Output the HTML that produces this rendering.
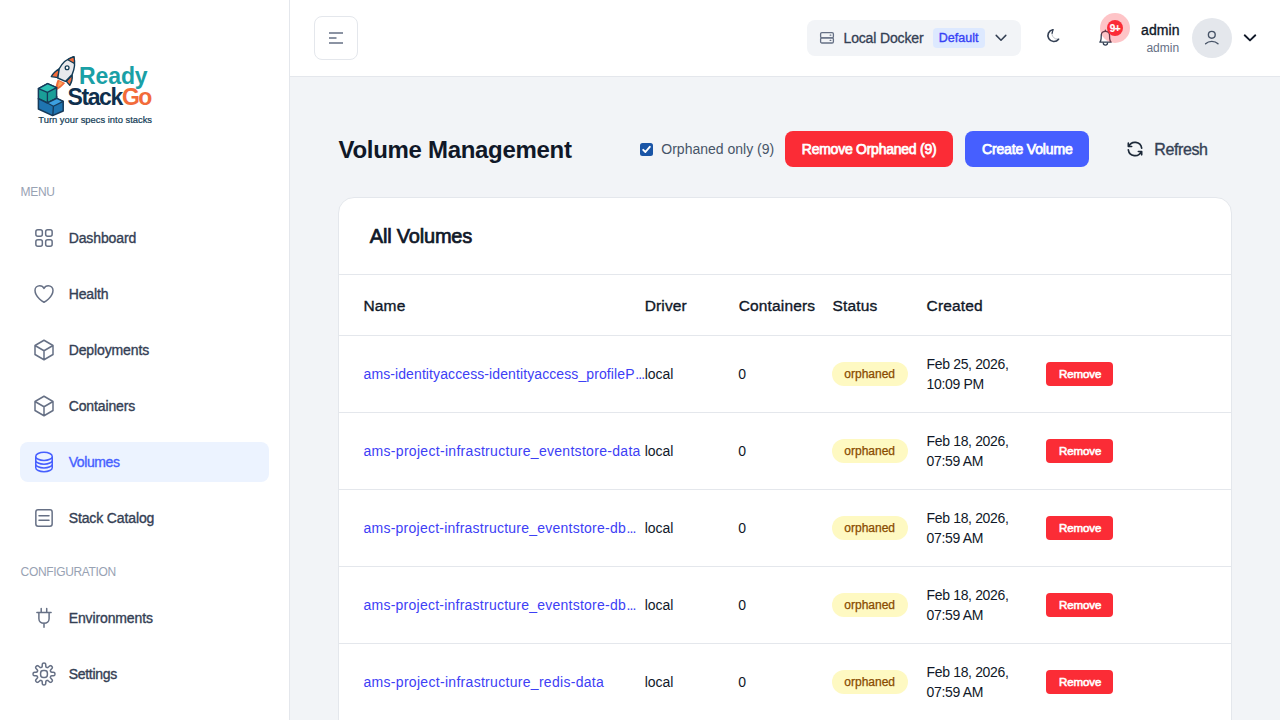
<!DOCTYPE html>
<html><head><meta charset="utf-8">
<style>
*{box-sizing:border-box;margin:0;padding:0}
html,body{width:1280px;height:720px;overflow:hidden;background:#F2F4F7;font-family:"Liberation Sans",sans-serif;position:relative}
.a{position:absolute}
.t{position:absolute;line-height:1;white-space:nowrap}
.sb{left:0;top:0;width:290px;height:720px;background:#fff;border-right:1px solid #E4E7EC}
.hd{left:290px;top:0;width:990px;height:77px;background:#fff;border-bottom:1px solid #E4E7EC}
.nav{font-size:14px;color:#344054;left:68.7px;-webkit-text-stroke:0.35px #344054;letter-spacing:-0.12px}
.ico{position:absolute;left:32px;width:24px;height:24px}
.grp{font-size:12px;color:#98A2B3;left:20.6px;letter-spacing:-0.35px}
.th{font-size:15.5px;color:#101828;top:297.8px;-webkit-text-stroke:0.35px #101828;letter-spacing:0.15px}
.lk{font-size:14px;color:#3D40F5;left:363.5px;letter-spacing:0.3px}
.dt{letter-spacing:-0.35px}
.cell{font-size:14px;color:#101828}
.div{left:339px;width:892px;height:1px;background:#E4E7EC}
.badge{left:832px;width:76px;height:24px;border-radius:12px;background:#FEF9C2}
.rm{left:1046px;width:67px;height:24px;border-radius:4px;background:#FB2C36}
</style></head><body>

<!-- SIDEBAR -->
<div class="a sb"></div>
<!-- logo -->
<svg class="a" style="left:30px;top:50px" width="130" height="80" viewBox="30 50 130 80">
  <!-- flame -->
  <path d="M57.8 79.6 L65.2 83 C62.6 86.2 59 89 55.4 90.6 C55.4 86.8 56.2 83 57.8 79.6 Z" fill="#F26B3A"/>
  <path d="M59 81.2 L62.8 83 C61.4 84.8 59.6 86.2 57.8 87.2 C58 85.2 58.4 83 59 81.2 Z" fill="#FBA55E"/>
  <!-- fins -->
  <path d="M59.6 68.6 C56 70.6 53 73.4 51.3 76.6 L57.9 77.6 Z" fill="#F26B3A" stroke="#123B55" stroke-width="1.3" stroke-linejoin="round"/>
  <path d="M72.2 75 L66.4 81.4 L69.8 85.4 C71.6 82.4 72.6 78.6 72.2 75 Z" fill="#F26B3A" stroke="#123B55" stroke-width="1.3" stroke-linejoin="round"/>
  <!-- body -->
  <path d="M73.9 56.6 C67.6 58.4 62 63.2 59.2 68.8 L57.8 78 L65.4 81.4 L72.2 74.4 C74.6 68.8 75.2 62.4 73.9 56.6 Z" fill="#E8E9EC" stroke="#123B55" stroke-width="1.4" stroke-linejoin="round"/>
  <path d="M73.9 56.6 C71.6 57.2 69.6 58.4 67.8 59.8 L74.4 63.6 C74.6 61.2 74.4 58.8 73.9 56.6 Z" fill="#F26B3A" stroke="#123B55" stroke-width="1.2" stroke-linejoin="round"/>
  <circle cx="67.1" cy="67.8" r="1.9" fill="#fff" stroke="#123B55" stroke-width="1.3"/>
  <!-- top cube -->
  <path d="M38.4 88.6 L47.6 83.6 L56.6 87.6 L56.6 98.2 L47.4 103 L38.4 98.8 Z" fill="#1A9E98" stroke="#163A5A" stroke-width="1.5" stroke-linejoin="round"/>
  <path d="M38.4 88.6 L47.6 83.6 L56.6 87.6 L47.4 92.4 Z" fill="#2BBFB3" stroke="#163A5A" stroke-width="1.3" stroke-linejoin="round"/>
  <path d="M47.4 92.4 L47.4 103" stroke="#163A5A" stroke-width="1.3"/>
  <!-- bottom cube -->
  <path d="M38.4 98.6 L47.4 103 L56.8 98.4 L63.2 101.4 L63.2 111 L52.6 115.6 L38.4 109 Z" fill="#1F74B0" stroke="#163A5A" stroke-width="1.5" stroke-linejoin="round"/>
  <path d="M47.4 103 L56.8 98.4 L63.2 101.4 L53.4 106.2 Z" fill="#3DA0E0" stroke="#163A5A" stroke-width="1.2" stroke-linejoin="round"/>
  <path d="M53.4 106.2 L52.8 115.4" stroke="#163A5A" stroke-width="1.3"/>
  <path d="M56.6 96 L56.6 98.4" stroke="#163A5A" stroke-width="1.5"/>
</svg>
<div class="t" style="left:79px;top:64.8px;font-size:23px;font-weight:700;color:#1AA0A6;letter-spacing:-0.1px">Ready</div>
<div class="t" style="left:67.5px;top:86px;font-size:23px;font-weight:700;color:#0F2F4D;letter-spacing:-1.4px">Stack<span style="color:#F26B3A">Go</span></div>
<div class="t" style="left:38.3px;top:114.8px;font-size:9.4px;color:#123B55;-webkit-text-stroke:0.2px #123B55">Turn your specs into stacks</div>

<div class="t grp" style="top:186.4px">MENU</div>

<svg class="ico" style="top:226px" viewBox="0 0 24 24" fill="none" stroke="#667085" stroke-width="1.5"><rect x="3.85" y="3.85" width="6.5" height="6.5" rx="2"/><rect x="13.65" y="3.85" width="6.5" height="6.5" rx="2"/><rect x="3.85" y="13.65" width="6.5" height="6.5" rx="2"/><rect x="13.65" y="13.65" width="6.5" height="6.5" rx="2"/></svg>
<div class="t nav" style="top:231.05px">Dashboard</div>

<svg class="ico" style="top:282px" viewBox="0 0 24 24" fill="none" stroke="#667085" stroke-width="1.5" stroke-linecap="round" stroke-linejoin="round"><path d="M21 8.25c0-2.485-2.099-4.5-4.688-4.5-1.935 0-3.597 1.126-4.312 2.733-.715-1.607-2.377-2.733-4.313-2.733C5.1 3.75 3 5.765 3 8.25c0 7.22 9 12 9 12s9-4.78 9-12Z"/></svg>
<div class="t nav" style="top:287.05px">Health</div>

<svg class="ico" style="top:338px" viewBox="0 0 24 24" fill="none" stroke="#667085" stroke-width="1.5" stroke-linecap="round" stroke-linejoin="round"><path d="m21 7.5-9-5.25L3 7.5m18 0-9 5.25m9-5.25v9l-9 5.25M3 7.5l9 5.25M3 7.5v9l9 5.25m0-9v9"/></svg>
<div class="t nav" style="top:343.05px">Deployments</div>

<svg class="ico" style="top:394px" viewBox="0 0 24 24" fill="none" stroke="#667085" stroke-width="1.5" stroke-linecap="round" stroke-linejoin="round"><path d="m21 7.5-9-5.25L3 7.5m18 0-9 5.25m9-5.25v9l-9 5.25M3 7.5l9 5.25M3 7.5v9l9 5.25m0-9v9"/></svg>
<div class="t nav" style="top:399.05px">Containers</div>

<div class="a" style="left:20px;top:442px;width:249px;height:40px;border-radius:8px;background:#ECF3FF"></div>
<svg class="ico" style="top:450px" viewBox="0 0 24 24" fill="none" stroke="#465FFF" stroke-width="1.5" stroke-linecap="round" stroke-linejoin="round"><path d="M20.25 6.375c0 2.278-3.694 4.125-8.25 4.125S3.75 8.653 3.75 6.375m16.5 0c0-2.278-3.694-4.125-8.25-4.125S3.75 4.097 3.75 6.375m16.5 0v11.25c0 2.278-3.694 4.125-8.25 4.125s-8.25-1.847-8.25-4.125V6.375m16.5 0v3.75m-16.5-3.75v3.75m16.5 0v3.75C20.25 16.153 16.556 18 12 18s-8.25-1.847-8.25-4.125v-3.75m16.5 0c0 2.278-3.694 4.125-8.25 4.125s-8.25-1.847-8.25-4.125"/></svg>
<div class="t nav" style="top:455.05px;color:#465FFF;-webkit-text-stroke:0.35px #465FFF;letter-spacing:-0.4px">Volumes</div>

<svg class="ico" style="top:506px" viewBox="0 0 24 24" fill="none" stroke="#667085" stroke-width="1.5" stroke-linecap="round" stroke-linejoin="round"><rect x="3.85" y="3.85" width="16.3" height="16.3" rx="2.2"/><path d="M7 9.8h10M7 14.2h10"/></svg>
<div class="t nav" style="top:511.05px">Stack Catalog</div>

<div class="t grp" style="top:566.2px">CONFIGURATION</div>

<svg class="ico" style="top:606px" viewBox="0 0 24 24" fill="none" stroke="#667085" stroke-width="1.5" stroke-linecap="round" stroke-linejoin="round"><path d="M9.2 2.6v3.9M14.7 2.6v3.9M4.9 6.5h14.2M6.9 6.5v6.3c0 2.7 2.3 4.5 5.1 4.5s5.1-1.8 5.1-4.5V6.5M12 17v4.2"/></svg>
<div class="t nav" style="top:611.05px">Environments</div>

<svg class="ico" style="top:662px" viewBox="0 0 24 24" fill="none" stroke="#667085" stroke-width="1.5" stroke-linecap="round" stroke-linejoin="round"><path d="M22.90 12.00 L22.90 12.21 L22.88 12.43 L22.85 12.64 L22.81 12.85 L22.73 13.06 L22.60 13.25 L22.38 13.44 L22.03 13.59 L21.49 13.70 L20.83 13.76 L20.16 13.79 L19.63 13.83 L19.27 13.90 L19.05 13.99 L18.91 14.10 L18.81 14.21 L18.74 14.34 L18.67 14.46 L18.61 14.59 L18.56 14.72 L18.51 14.85 L18.46 14.98 L18.41 15.11 L18.38 15.25 L18.37 15.40 L18.39 15.58 L18.49 15.80 L18.69 16.10 L19.04 16.50 L19.48 17.00 L19.91 17.51 L20.21 17.97 L20.36 18.33 L20.38 18.61 L20.33 18.84 L20.24 19.04 L20.13 19.22 L20.00 19.39 L19.86 19.55 L19.71 19.71 L19.55 19.86 L19.39 20.00 L19.22 20.13 L19.04 20.24 L18.84 20.33 L18.61 20.38 L18.33 20.36 L17.97 20.21 L17.51 19.91 L17.00 19.48 L16.50 19.04 L16.10 18.69 L15.80 18.49 L15.58 18.39 L15.40 18.37 L15.25 18.38 L15.11 18.41 L14.98 18.46 L14.85 18.51 L14.72 18.56 L14.59 18.61 L14.46 18.67 L14.34 18.74 L14.21 18.81 L14.10 18.91 L13.99 19.05 L13.90 19.27 L13.83 19.63 L13.79 20.16 L13.76 20.83 L13.70 21.49 L13.59 22.03 L13.44 22.38 L13.25 22.60 L13.06 22.73 L12.85 22.81 L12.64 22.85 L12.43 22.88 L12.21 22.90 L12.00 22.90 L11.79 22.90 L11.57 22.88 L11.36 22.85 L11.15 22.81 L10.94 22.73 L10.75 22.60 L10.56 22.38 L10.41 22.03 L10.30 21.49 L10.24 20.83 L10.21 20.16 L10.17 19.63 L10.10 19.27 L10.01 19.05 L9.90 18.91 L9.79 18.81 L9.66 18.74 L9.54 18.67 L9.41 18.61 L9.28 18.56 L9.15 18.51 L9.02 18.46 L8.89 18.41 L8.75 18.38 L8.60 18.37 L8.42 18.39 L8.20 18.49 L7.90 18.69 L7.50 19.04 L7.00 19.48 L6.49 19.91 L6.03 20.21 L5.67 20.36 L5.39 20.38 L5.16 20.33 L4.96 20.24 L4.78 20.13 L4.61 20.00 L4.45 19.86 L4.29 19.71 L4.14 19.55 L4.00 19.39 L3.87 19.22 L3.76 19.04 L3.67 18.84 L3.62 18.61 L3.64 18.33 L3.79 17.97 L4.09 17.51 L4.52 17.00 L4.96 16.50 L5.31 16.10 L5.51 15.80 L5.61 15.58 L5.63 15.40 L5.62 15.25 L5.59 15.11 L5.54 14.98 L5.49 14.85 L5.44 14.72 L5.39 14.59 L5.33 14.46 L5.26 14.34 L5.19 14.21 L5.09 14.10 L4.95 13.99 L4.73 13.90 L4.37 13.83 L3.84 13.79 L3.17 13.76 L2.51 13.70 L1.97 13.59 L1.62 13.44 L1.40 13.25 L1.27 13.06 L1.19 12.85 L1.15 12.64 L1.12 12.43 L1.10 12.21 L1.10 12.00 L1.10 11.79 L1.12 11.57 L1.15 11.36 L1.19 11.15 L1.27 10.94 L1.40 10.75 L1.62 10.56 L1.97 10.41 L2.51 10.30 L3.17 10.24 L3.84 10.21 L4.37 10.17 L4.73 10.10 L4.95 10.01 L5.09 9.90 L5.19 9.79 L5.26 9.66 L5.33 9.54 L5.39 9.41 L5.44 9.28 L5.49 9.15 L5.54 9.02 L5.59 8.89 L5.62 8.75 L5.63 8.60 L5.61 8.42 L5.51 8.20 L5.31 7.90 L4.96 7.50 L4.52 7.00 L4.09 6.49 L3.79 6.03 L3.64 5.67 L3.62 5.39 L3.67 5.16 L3.76 4.96 L3.87 4.78 L4.00 4.61 L4.14 4.45 L4.29 4.29 L4.45 4.14 L4.61 4.00 L4.78 3.87 L4.96 3.76 L5.16 3.67 L5.39 3.62 L5.67 3.64 L6.03 3.79 L6.49 4.09 L7.00 4.52 L7.50 4.96 L7.90 5.31 L8.20 5.51 L8.42 5.61 L8.60 5.63 L8.75 5.62 L8.89 5.59 L9.02 5.54 L9.15 5.49 L9.28 5.44 L9.41 5.39 L9.54 5.33 L9.66 5.26 L9.79 5.19 L9.90 5.09 L10.01 4.95 L10.10 4.73 L10.17 4.37 L10.21 3.84 L10.24 3.17 L10.30 2.51 L10.41 1.97 L10.56 1.62 L10.75 1.40 L10.94 1.27 L11.15 1.19 L11.36 1.15 L11.57 1.12 L11.79 1.10 L12.00 1.10 L12.21 1.10 L12.43 1.12 L12.64 1.15 L12.85 1.19 L13.06 1.27 L13.25 1.40 L13.44 1.62 L13.59 1.97 L13.70 2.51 L13.76 3.17 L13.79 3.84 L13.83 4.37 L13.90 4.73 L13.99 4.95 L14.10 5.09 L14.21 5.19 L14.34 5.26 L14.46 5.33 L14.59 5.39 L14.72 5.44 L14.85 5.49 L14.98 5.54 L15.11 5.59 L15.25 5.62 L15.40 5.63 L15.58 5.61 L15.80 5.51 L16.10 5.31 L16.50 4.96 L17.00 4.52 L17.51 4.09 L17.97 3.79 L18.33 3.64 L18.61 3.62 L18.84 3.67 L19.04 3.76 L19.22 3.87 L19.39 4.00 L19.55 4.14 L19.71 4.29 L19.86 4.45 L20.00 4.61 L20.13 4.78 L20.24 4.96 L20.33 5.16 L20.38 5.39 L20.36 5.67 L20.21 6.03 L19.91 6.49 L19.48 7.00 L19.04 7.50 L18.69 7.90 L18.49 8.20 L18.39 8.42 L18.37 8.60 L18.38 8.75 L18.41 8.89 L18.46 9.02 L18.51 9.15 L18.56 9.28 L18.61 9.41 L18.67 9.54 L18.74 9.66 L18.81 9.79 L18.91 9.90 L19.05 10.01 L19.27 10.10 L19.63 10.17 L20.16 10.21 L20.83 10.24 L21.49 10.30 L22.03 10.41 L22.38 10.56 L22.60 10.75 L22.73 10.94 L22.81 11.15 L22.85 11.36 L22.88 11.57 L22.90 11.79Z"/><rect x="8.6" y="8.6" width="6.8" height="6.8" rx="2.6"/></svg>
<div class="t nav" style="top:667.05px;letter-spacing:-0.3px">Settings</div>

<!-- HEADER -->
<div class="a hd"></div>
<div class="a" style="left:314px;top:16px;width:44px;height:44px;border:1px solid #E4E7EC;border-radius:8px;background:#fff"></div>
<svg class="a" style="left:314px;top:16px" width="44" height="44" viewBox="0 0 44 44"><path d="M15 17h14M15 22h7.5M15 27h14" stroke="#667085" stroke-width="1.6"/></svg>

<div class="a" style="left:807px;top:20px;width:214px;height:36px;border-radius:8px;background:#F2F4F7"></div>
<svg class="a" style="left:818px;top:30px" width="18" height="16" viewBox="0 0 18 16" fill="none" stroke="#667085" stroke-width="1.3"><rect x="2.6" y="2.6" width="12.8" height="5.2" rx="1.3"/><rect x="2.6" y="7.8" width="12.8" height="5.2" rx="1.3"/><path d="M12.2 5.2h.6M12.2 10.4h.6" stroke-linecap="round"/></svg>
<div class="t" style="left:843.5px;top:31.25px;font-size:14px;color:#344054;-webkit-text-stroke:0.3px #344054;letter-spacing:-0.15px">Local Docker</div>
<div class="a" style="left:933px;top:28px;width:52px;height:20px;border-radius:4px;background:#DDE9FF"></div>
<div class="t" style="left:938.8px;top:31.7px;font-size:12.5px;color:#3641F5;-webkit-text-stroke:0.35px #3641F5">Default</div>
<svg class="a" style="left:993px;top:30px" width="16" height="16" viewBox="0 0 16 16" fill="none" stroke="#344054" stroke-width="1.5" stroke-linecap="round" stroke-linejoin="round"><path d="M3.2 5.4 8 10.2l4.8-4.8"/></svg>

<svg class="a" style="left:1041.6px;top:25.2px" width="21" height="21" viewBox="0 0 24 24" fill="none" stroke="#344054" stroke-linecap="round" stroke-linejoin="round"><path d="M12.3 5.4A6.8 6.8 0 1 0 18.9 16.3" stroke-width="1.9"/><path d="M18.9 16.3A7 7 0 0 1 12.3 5.4" stroke-width="0.6" opacity="0.6"/><path d="M12.6 5.2 11.6 9.6" stroke-width="1.3"/></svg>

<svg class="a" style="left:1095px;top:28px" width="22" height="22" viewBox="0 0 22 22" fill="none" stroke="#344054" stroke-width="1.3" stroke-linecap="round" stroke-linejoin="round"><path d="M4.9 14.2h11.2c-.8-.9-1.3-1.8-1.4-3.6l-.2-4c-.2-1.9-1.8-3.3-4.1-3.3S6.5 4.7 6.3 6.6l-.2 4c-.1 1.8-.5 2.7-1.2 3.6z"/><path d="M10.4 3.3V2.2"/><path d="M8.3 15a2.1 2.1 0 0 0 4.2 0"/></svg>
<div class="a" style="left:1100px;top:13px;width:30px;height:30px;border-radius:50%;background:#FB2C36;opacity:0.28"></div>
<div class="a" style="left:1107px;top:20px;width:16px;height:16px;border-radius:50%;background:#FB2C36"></div>
<div class="t" style="left:1107px;top:23.6px;width:16px;text-align:center;font-size:10px;font-weight:700;color:#fff;letter-spacing:-0.4px;-webkit-text-stroke:0.2px #fff">9+</div>

<div class="t" style="left:1141px;top:22.95px;font-size:14px;color:#101828;-webkit-text-stroke:0.35px #101828;letter-spacing:0.1px">admin</div>
<div class="t" style="left:1146.4px;top:41.54px;font-size:12px;color:#667085">admin</div>
<div class="a" style="left:1192px;top:18px;width:40px;height:40px;border-radius:50%;background:#E4E7EC"></div>
<svg class="a" style="left:1202px;top:28px" width="20" height="20" viewBox="0 0 20 20" fill="none" stroke="#475467" stroke-width="1.4" stroke-linecap="round"><circle cx="9.8" cy="6.8" r="3.4"/><path d="M3.6 15.8c1.6-1.6 3.8-2.4 6.2-2.4s4.6.8 6.2 2.4"/></svg>
<svg class="a" style="left:1242px;top:30px" width="16" height="16" viewBox="0 0 16 16" fill="none" stroke="#101828" stroke-width="1.9" stroke-linecap="round" stroke-linejoin="round"><path d="M2.7 5.3 8 10.4l5.3-5.1"/></svg>

<!-- MAIN -->
<div class="t" style="left:338.5px;top:137.6px;font-size:24px;font-weight:700;color:#101828;letter-spacing:-0.3px">Volume Management</div>
<div class="a" style="left:640px;top:143px;width:13px;height:13px;border-radius:2.5px;background:#1A55A6"></div>
<svg class="a" style="left:640px;top:143px" width="13" height="13" viewBox="0 0 13 13" fill="none" stroke="#fff" stroke-width="1.9" stroke-linecap="round" stroke-linejoin="round"><path d="M3.2 6.8 5.4 9 9.8 3.8"/></svg>
<div class="t" style="left:661.3px;top:142.15px;font-size:14px;color:#475467">Orphaned only (9)</div>

<div class="a" style="left:785px;top:131px;width:168px;height:36px;border-radius:8px;background:#FB2C36"></div>
<div class="t" style="left:801.8px;top:142.25px;font-size:14px;color:#fff;letter-spacing:-0.25px;-webkit-text-stroke:0.75px #fff">Remove Orphaned (9)</div>
<div class="a" style="left:965px;top:131px;width:124px;height:36px;border-radius:8px;background:#465FFF"></div>
<div class="t" style="left:982px;top:142.05px;font-size:14px;color:#fff;letter-spacing:-0.16px;-webkit-text-stroke:0.75px #fff">Create Volume</div>
<svg class="a" style="left:1125px;top:139px" width="20" height="20" viewBox="0 0 24 24" fill="none" stroke="#1D2939" stroke-width="2" stroke-linecap="round" stroke-linejoin="round"><path d="M20 11a8.1 8.1 0 0 0-15.5-2m-.5-4v4h4"/><path d="M4 13a8.1 8.1 0 0 0 15.5 2m.5 4v-4h-4"/></svg>
<div class="t" style="left:1154.3px;top:142.0px;font-size:16px;color:#344054;-webkit-text-stroke:0.35px #344054;letter-spacing:-0.4px">Refresh</div>

<div class="a" style="left:338px;top:197px;width:894px;height:600px;border:1px solid #E4E7EC;border-radius:16px;background:#fff"></div>
<div class="t" style="left:369.8px;top:226.07px;font-size:20px;color:#101828;letter-spacing:-0.2px;-webkit-text-stroke:0.7px #101828">All Volumes</div>
<div class="a div" style="top:274px"></div>
<div class="t th" style="left:363.5px">Name</div>
<div class="t th" style="left:644.7px">Driver</div>
<div class="t th" style="left:738.7px">Containers</div>
<div class="t th" style="left:832.5px">Status</div>
<div class="t th" style="left:926.6px">Created</div>
<div class="a div" style="top:335px"></div>
<div class="t lk" style="top:367.25px;letter-spacing:0.1px">ams-identityaccess-identityaccess_profileP<span style="letter-spacing:-0.9px;margin-left:0.6px">...</span></div>
<div class="t cell" style="left:644.7px;top:367.35px">local</div>
<div class="t cell" style="left:738.3px;top:367.35px">0</div>
<div class="a badge" style="top:362px"></div>
<div class="t" style="left:844.3px;top:368.04px;font-size:12px;color:#894B00;-webkit-text-stroke:0.25px #894B00">orphaned</div>
<div class="t cell dt" style="left:926.6px;top:357.15px">Feb 25, 2026,</div>
<div class="t cell dt" style="left:926.6px;top:376.85px">10:09 PM</div>
<div class="a rm" style="top:362px"></div>
<div class="t" style="left:1059px;top:368.74px;font-size:11.5px;color:#fff;letter-spacing:-0.1px;-webkit-text-stroke:0.6px #fff">Remove</div>
<div class="a div" style="top:412px"></div>
<div class="t lk" style="top:444.25px">ams-project-infrastructure_eventstore-data</div>
<div class="t cell" style="left:644.7px;top:444.35px">local</div>
<div class="t cell" style="left:738.3px;top:444.35px">0</div>
<div class="a badge" style="top:439px"></div>
<div class="t" style="left:844.3px;top:445.04px;font-size:12px;color:#894B00;-webkit-text-stroke:0.25px #894B00">orphaned</div>
<div class="t cell dt" style="left:926.6px;top:434.15px">Feb 18, 2026,</div>
<div class="t cell dt" style="left:926.6px;top:453.85px">07:59 AM</div>
<div class="a rm" style="top:439px"></div>
<div class="t" style="left:1059px;top:445.74px;font-size:11.5px;color:#fff;letter-spacing:-0.1px;-webkit-text-stroke:0.6px #fff">Remove</div>
<div class="a div" style="top:489px"></div>
<div class="t lk" style="top:521.25px;letter-spacing:0.24px">ams-project-infrastructure_eventstore-db<span style="letter-spacing:-0.9px;margin-left:0.6px">...</span></div>
<div class="t cell" style="left:644.7px;top:521.35px">local</div>
<div class="t cell" style="left:738.3px;top:521.35px">0</div>
<div class="a badge" style="top:516px"></div>
<div class="t" style="left:844.3px;top:522.04px;font-size:12px;color:#894B00;-webkit-text-stroke:0.25px #894B00">orphaned</div>
<div class="t cell dt" style="left:926.6px;top:511.15px">Feb 18, 2026,</div>
<div class="t cell dt" style="left:926.6px;top:530.85px">07:59 AM</div>
<div class="a rm" style="top:516px"></div>
<div class="t" style="left:1059px;top:522.74px;font-size:11.5px;color:#fff;letter-spacing:-0.1px;-webkit-text-stroke:0.6px #fff">Remove</div>
<div class="a div" style="top:566px"></div>
<div class="t lk" style="top:598.25px;letter-spacing:0.24px">ams-project-infrastructure_eventstore-db<span style="letter-spacing:-0.9px;margin-left:0.6px">...</span></div>
<div class="t cell" style="left:644.7px;top:598.35px">local</div>
<div class="t cell" style="left:738.3px;top:598.35px">0</div>
<div class="a badge" style="top:593px"></div>
<div class="t" style="left:844.3px;top:599.04px;font-size:12px;color:#894B00;-webkit-text-stroke:0.25px #894B00">orphaned</div>
<div class="t cell dt" style="left:926.6px;top:588.15px">Feb 18, 2026,</div>
<div class="t cell dt" style="left:926.6px;top:607.85px">07:59 AM</div>
<div class="a rm" style="top:593px"></div>
<div class="t" style="left:1059px;top:599.74px;font-size:11.5px;color:#fff;letter-spacing:-0.1px;-webkit-text-stroke:0.6px #fff">Remove</div>
<div class="a div" style="top:643px"></div>
<div class="t lk" style="top:675.25px">ams-project-infrastructure_redis-data</div>
<div class="t cell" style="left:644.7px;top:675.35px">local</div>
<div class="t cell" style="left:738.3px;top:675.35px">0</div>
<div class="a badge" style="top:670px"></div>
<div class="t" style="left:844.3px;top:676.04px;font-size:12px;color:#894B00;-webkit-text-stroke:0.25px #894B00">orphaned</div>
<div class="t cell dt" style="left:926.6px;top:665.15px">Feb 18, 2026,</div>
<div class="t cell dt" style="left:926.6px;top:684.85px">07:59 AM</div>
<div class="a rm" style="top:670px"></div>
<div class="t" style="left:1059px;top:676.74px;font-size:11.5px;color:#fff;letter-spacing:-0.1px;-webkit-text-stroke:0.6px #fff">Remove</div>

</body></html>
